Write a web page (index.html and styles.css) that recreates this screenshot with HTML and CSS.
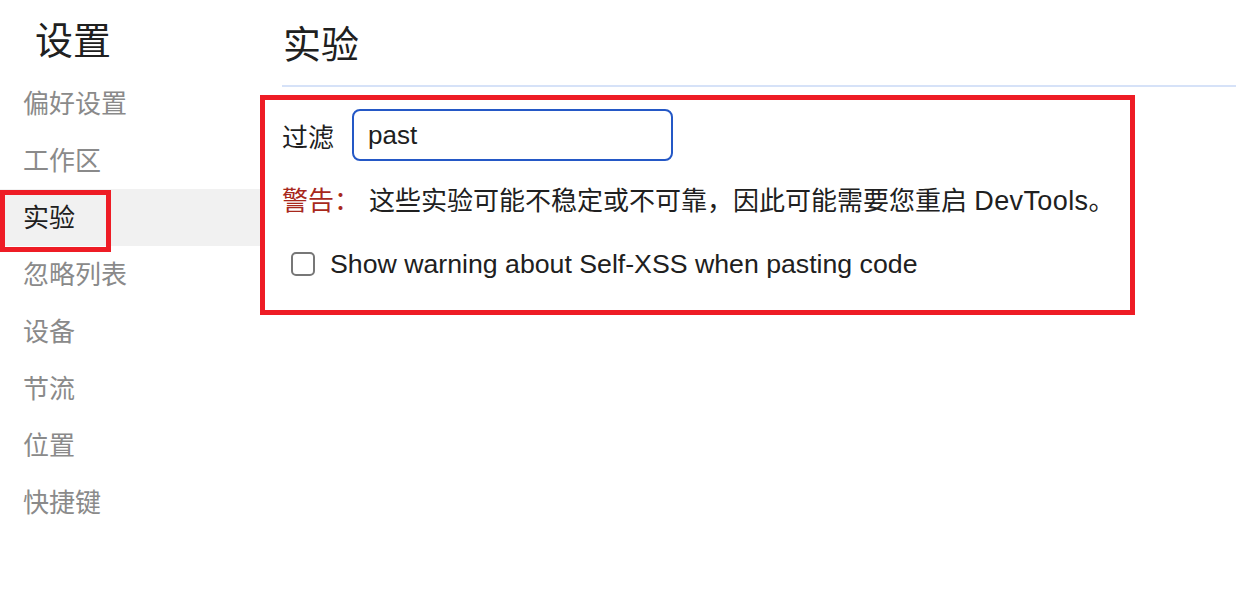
FILE: index.html
```html
<!DOCTYPE html>
<html lang="zh-CN">
<head>
<meta charset="utf-8">
<title>设置</title>
<link rel="stylesheet" href="styles.css">
</head>
<body>
<div class="app">
  <aside class="sidebar">
    <div class="sidebar-title">设置</div>
    <nav class="nav">
      <div class="nav-item">偏好设置</div>
      <div class="nav-item">工作区</div>
      <div class="nav-item selected">实验<span class="mark"></span></div>
      <div class="nav-item">忽略列表</div>
      <div class="nav-item">设备</div>
      <div class="nav-item">节流</div>
      <div class="nav-item">位置</div>
      <div class="nav-item">快捷键</div>
    </nav>
  </aside>
  <main class="main">
    <h1 class="heading">实验</h1>
    <div class="divider"></div>
    <section class="panel">
      <div class="filter-row">
        <label class="filter-label" for="filter">过滤</label>
        <input id="filter" class="filter-input" type="text" value="past">
      </div>
      <div class="warning-row">
        <span class="warning-label">警告：</span>
        <span class="warning-text">这些实验可能不稳定或不可靠，因此可能需要您重启 <span class="latin">DevTools</span>。</span>
      </div>
      <label class="exp-row">
        <input class="exp-check" type="checkbox">
        <span class="exp-text">Show warning about Self-XSS when pasting code</span>
      </label>
    </section>
  </main>
</div>
</body>
</html>
```

FILE: styles.css
```css
* { box-sizing: border-box; }

html, body {
  margin: 0;
  padding: 0;
  background: #ffffff;
}

body {
  font-family: "Liberation Sans", "Noto Sans CJK SC", sans-serif;
  color: #222222;
}

.app {
  display: flex;
  width: 1236px;
  height: 598px;
}

.sidebar {
  width: 260px;
  flex: 0 0 260px;
}

.sidebar-title {
  height: 75px;
  padding-left: 35px;
  font-size: 38px;
  line-height: 82px;
  color: #202020;
}

.nav {
  display: flex;
  flex-direction: column;
}

.nav-item {
  position: relative;
  height: 57px;
  padding-left: 23px;
  font-size: 26px;
  line-height: 58px;
  color: #8a8a8a;
}

.nav-item.selected {
  background: #f1f1f1;
  color: #202020;
}

.mark {
  position: absolute;
  left: 0;
  top: 1px;
  width: 111px;
  height: 62px;
  border: 5px solid #ee1c25;
}

.main {
  flex: 1;
  display: flex;
  flex-direction: column;
}

.heading {
  margin: 0;
  height: 85px;
  padding-left: 23px;
  font-size: 38px;
  font-weight: normal;
  line-height: 90px;
  color: #202020;
}

.divider {
  margin-left: 22px;
  height: 2px;
  background: #d6e2f8;
}

.panel {
  margin-top: 8px;
  width: 875px;
  height: 220px;
  border: 5px solid #ee1c25;
  padding: 9px 0 0 17px;
  display: flex;
  flex-direction: column;
}

.filter-row {
  display: flex;
  align-items: center;
  gap: 18px;
}

.filter-label {
  font-size: 26px;
  color: #202020;
}

.filter-input {
  width: 321px;
  height: 52px;
  border: 2px solid #2458c6;
  border-radius: 8px;
  padding: 0 0 0 14px;
  font-family: "Liberation Sans", "Noto Sans CJK SC", sans-serif;
  font-size: 26px;
  color: #202020;
  outline: none;
  background: #ffffff;
}

.warning-row {
  margin-top: 22px;
  display: flex;
  align-items: center;
  font-size: 26px;
  line-height: 36px;
}

.warning-label {
  width: 87px;
  color: #a8281c;
}

.warning-text {
  color: #202020;
}

.latin {
  font-size: 27px;
  letter-spacing: 0.4px;
}

.exp-row {
  margin-top: 27px;
  display: flex;
  align-items: center;
  gap: 15px;
  padding-left: 9px;
  font-size: 26.7px;
  line-height: 36px;
  color: #202020;
}

.exp-check {
  appearance: none;
  -webkit-appearance: none;
  margin: 0;
  width: 24px;
  height: 24px;
  border: 2px solid #777777;
  border-radius: 5px;
  background: #ffffff;
}
```
